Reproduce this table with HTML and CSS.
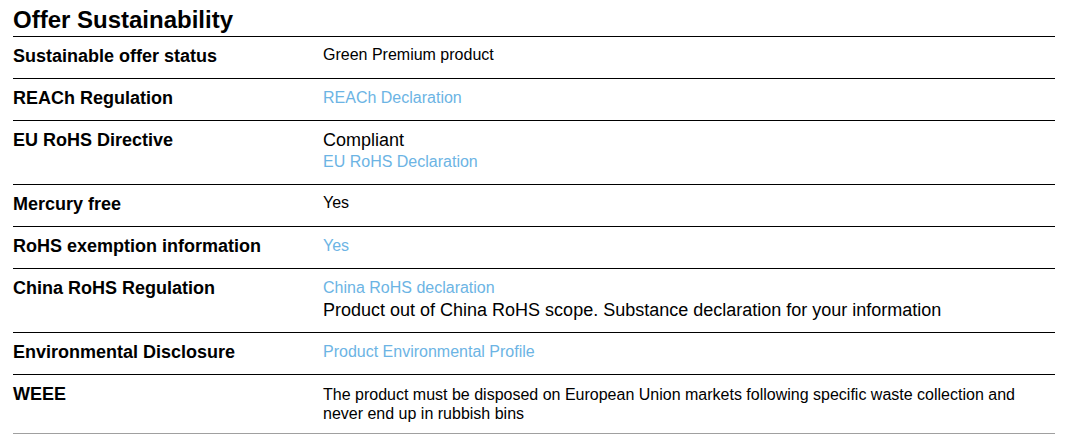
FILE: index.html
```html
<!DOCTYPE html>
<html lang="en">
<head>
<meta charset="utf-8">
<title>Offer Sustainability</title>
<link rel="stylesheet" href="styles.css">
</head>
<body>
<section class="sheet">
  <h2 class="title">Offer Sustainability</h2>
  <div class="table">
    <div class="row">
      <div class="label">Sustainable offer status</div>
      <div class="value"><span class="plain">Green Premium product</span></div>
    </div>
    <div class="row">
      <div class="label">REACh Regulation</div>
      <div class="value"><a class="link" href="#">REACh Declaration</a></div>
    </div>
    <div class="row">
      <div class="label">EU RoHS Directive</div>
      <div class="value">
        <span class="large">Compliant</span>
        <a class="link" href="#">EU RoHS Declaration</a>
      </div>
    </div>
    <div class="row">
      <div class="label">Mercury free</div>
      <div class="value"><span class="plain">Yes</span></div>
    </div>
    <div class="row">
      <div class="label">RoHS exemption information</div>
      <div class="value"><a class="link" href="#">Yes</a></div>
    </div>
    <div class="row">
      <div class="label">China RoHS Regulation</div>
      <div class="value">
        <a class="link" href="#">China RoHS declaration</a>
        <span class="large">Product out of China RoHS scope. Substance declaration for your information</span>
      </div>
    </div>
    <div class="row">
      <div class="label">Environmental Disclosure</div>
      <div class="value"><a class="link" href="#">Product Environmental Profile</a></div>
    </div>
    <div class="row last">
      <div class="label">WEEE</div>
      <div class="value"><p class="note">The product must be disposed on European Union markets following specific waste collection and never end up in rubbish bins</p></div>
    </div>
  </div>
</section>
</body>
</html>
```

FILE: styles.css
```css
* { box-sizing: border-box; }

body {
  margin: 0;
  background: #ffffff;
  color: #000000;
  font-family: "Liberation Sans", Arial, sans-serif;
}

.sheet {
  margin-left: 13px;
  width: 1042px;
}

.title {
  margin: 0;
  padding-top: 6px;
  padding-bottom: 2px;
  font-size: 24px;
  line-height: 28px;
  font-weight: bold;
}

.row {
  display: grid;
  grid-template-columns: 310px 1fr;
  border-top: 1px solid #000000;
  padding-top: 8px;
  padding-bottom: 11px;
}

.row.last {
  border-bottom: 1px solid #a0a0a0;
  padding-bottom: 10px;
}

.label {
  font-size: 18px;
  line-height: 22px;
  font-weight: bold;
}

.value {
  display: flex;
  flex-direction: column;
  align-items: flex-start;
}

.plain {
  font-size: 16px;
  line-height: 22px;
  margin-top: -1px;
  margin-bottom: 1px;
}

.large {
  font-size: 18px;
  line-height: 22px;
}

.link {
  font-size: 16px;
  line-height: 22px;
  color: #6cb4e4;
  text-decoration: none;
}

.note {
  margin: 0;
  max-width: 720px;
  font-size: 16px;
  line-height: 19px;
  padding-top: 2px;
}
```
